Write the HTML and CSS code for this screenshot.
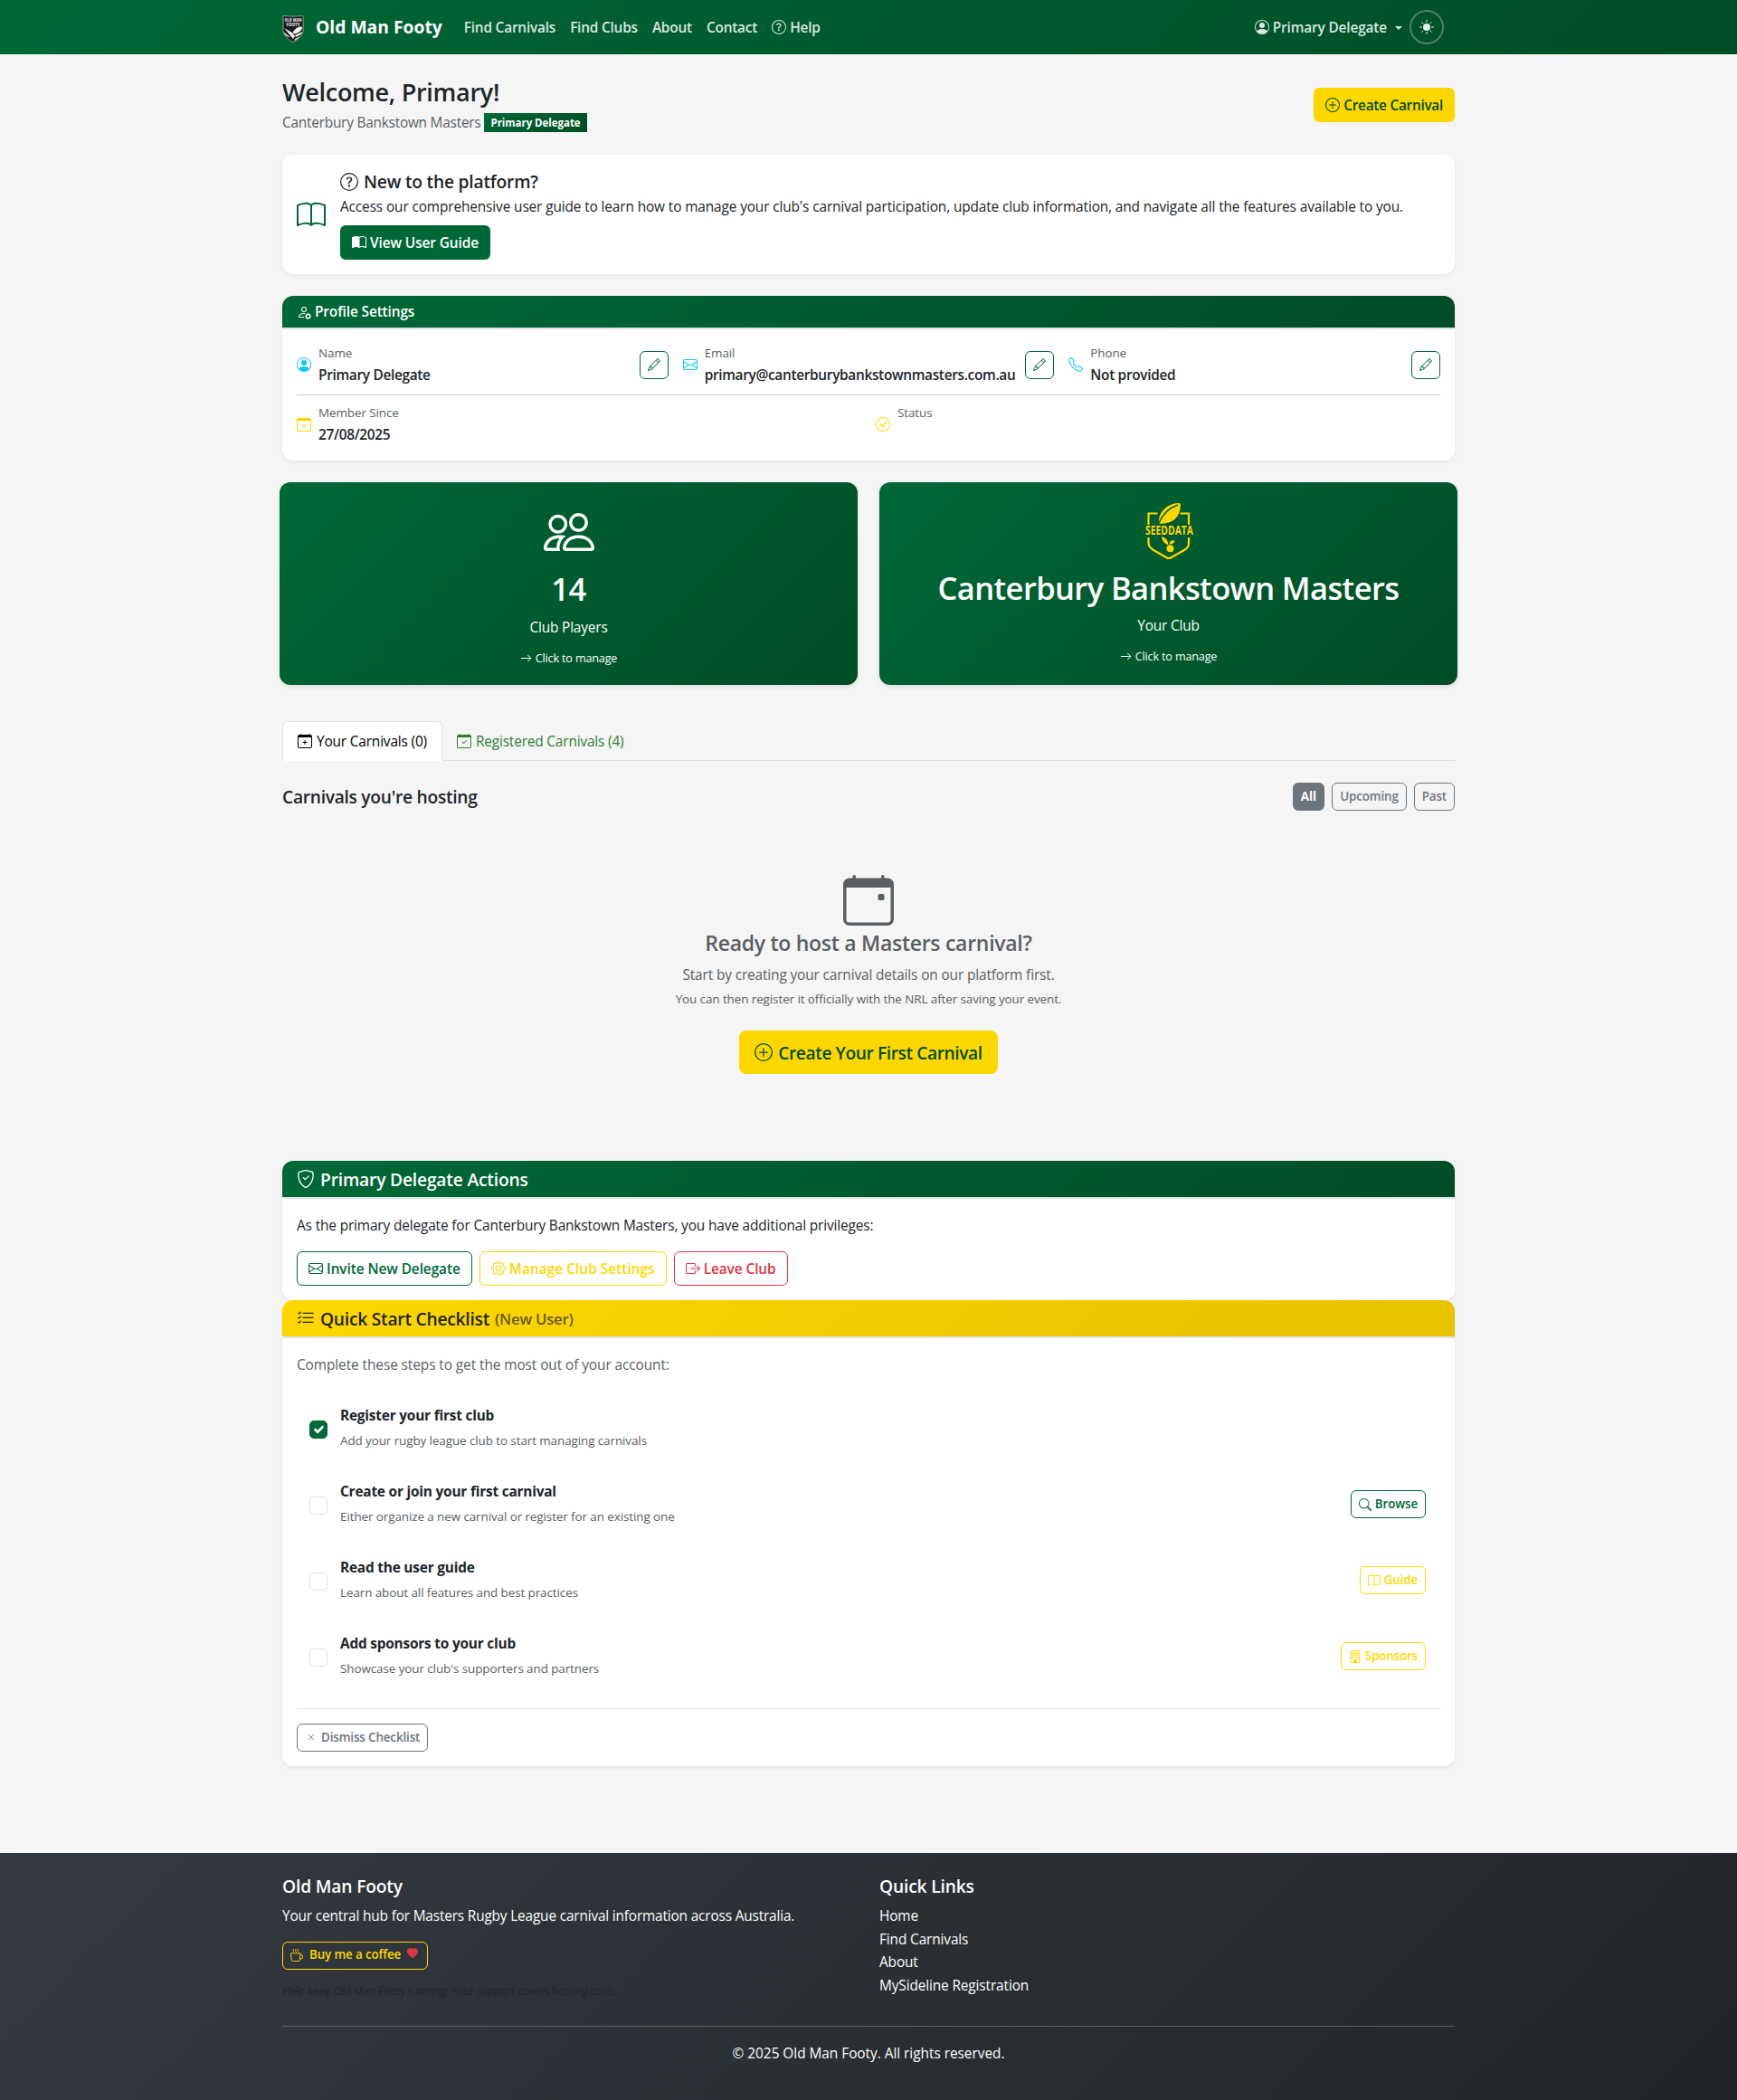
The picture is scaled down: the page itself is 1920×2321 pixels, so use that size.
FILE: index.html
```html
<!DOCTYPE html>
<html lang="en">
<head>
<meta charset="utf-8">
<title>Dashboard - Old Man Footy</title>
<link rel="stylesheet" href="styles.css">
</head>
<body>
<svg class="sprite" width="0" height="0" aria-hidden="true">
  <symbol id="question-circle" viewBox="0 0 16 16"><path d="M8 15A7 7 0 1 1 8 1a7 7 0 0 1 0 14m0 1A8 8 0 1 0 8 0a8 8 0 0 0 0 16"/><path d="M5.255 5.786a.237.237 0 0 0 .241.247h.825c.138 0 .248-.113.266-.25.09-.656.54-1.134 1.342-1.134.686 0 1.314.343 1.314 1.168 0 .635-.374.927-.965 1.371-.673.489-1.206 1.06-1.168 1.987l.003.217a.25.25 0 0 0 .25.246h.811a.25.25 0 0 0 .25-.25v-.105c0-.718.273-.927 1.01-1.486.609-.463 1.244-.977 1.244-2.056 0-1.511-1.276-2.241-2.673-2.241-1.267 0-2.655.59-2.75 2.286m1.557 5.763c0 .533.425.927 1.01.927.609 0 1.028-.394 1.028-.927 0-.552-.42-.94-1.029-.94-.584 0-1.009.388-1.009.94"/></symbol>
  <symbol id="person-circle" viewBox="0 0 16 16"><path d="M11 6a3 3 0 1 1-6 0 3 3 0 0 1 6 0"/><path fill-rule="evenodd" d="M0 8a8 8 0 1 1 16 0A8 8 0 0 1 0 8m8-7a7 7 0 0 0-5.468 11.37C3.242 11.226 4.805 10 8 10s4.757 1.225 5.468 2.37A7 7 0 0 0 8 1"/></symbol>
  <symbol id="sun" viewBox="0 0 16 16"><circle cx="8" cy="8" r="4"/><path fill="none" stroke="currentColor" stroke-linecap="round" d="M8 .5v2M8 13.5v2M.5 8h2M13.5 8h2M2.7 2.7l1.4 1.4M11.9 11.9l1.4 1.4M2.7 13.3l1.4-1.4M11.9 4.1l1.4-1.4"/></symbol>
  <symbol id="plus-circle" viewBox="0 0 16 16"><path d="M8 15A7 7 0 1 1 8 1a7 7 0 0 1 0 14m0 1A8 8 0 1 0 8 0a8 8 0 0 0 0 16"/><path d="M8 4a.5.5 0 0 1 .5.5v3h3a.5.5 0 0 1 0 1h-3v3a.5.5 0 0 1-1 0v-3h-3a.5.5 0 0 1 0-1h3v-3A.5.5 0 0 1 8 4"/></symbol>
  <symbol id="book" viewBox="0 0 16 16"><path d="M1 2.828c.885-.37 2.154-.769 3.388-.893 1.33-.134 2.458.063 3.112.752v9.746c-.935-.53-2.12-.603-3.213-.493-1.18.12-2.37.461-3.287.811zm7.5-.141c.654-.689 1.782-.886 3.112-.752 1.234.124 2.503.523 3.388.893v9.923c-.918-.35-2.107-.692-3.287-.81-1.094-.111-2.278-.039-3.213.492zM8 1.783C7.015.936 5.587.81 4.287.94c-1.514.153-3.042.672-3.994 1.105A.5.5 0 0 0 0 2.5v11a.5.5 0 0 0 .707.455c.882-.4 2.303-.881 3.68-1.02 1.409-.142 2.59.087 3.223.877a.5.5 0 0 0 .78 0c.633-.79 1.814-1.019 3.222-.877 1.378.139 2.8.62 3.681 1.02A.5.5 0 0 0 16 13.5v-11a.5.5 0 0 0-.293-.455c-.952-.433-2.48-.952-3.994-1.105C10.413.809 8.985.936 8 1.783"/></symbol>
  <symbol id="book-half" viewBox="0 0 16 16"><path d="M8.5 2.687c.654-.689 1.782-.886 3.112-.752 1.234.124 2.503.523 3.388.893v9.923c-.918-.35-2.107-.692-3.287-.81-1.094-.111-2.278-.039-3.213.492zM8 1.783C7.015.936 5.587.81 4.287.94c-1.514.153-3.042.672-3.994 1.105A.5.5 0 0 0 0 2.5v11a.5.5 0 0 0 .707.455c.882-.4 2.303-.881 3.68-1.02 1.409-.142 2.59.087 3.223.877a.5.5 0 0 0 .78 0c.633-.79 1.814-1.019 3.222-.877 1.378.139 2.8.62 3.681 1.02A.5.5 0 0 0 16 13.5v-11a.5.5 0 0 0-.293-.455c-.952-.433-2.48-.952-3.994-1.105C10.413.809 8.985.936 8 1.783"/></symbol>
  <symbol id="person-gear" viewBox="0 0 16 16"><path d="M11 5a3 3 0 1 1-6 0 3 3 0 0 1 6 0M8 7a2 2 0 1 0 0-4 2 2 0 0 0 0 4m.256 7a4.5 4.5 0 0 1-.229-1.004H3c.001-.246.154-.986.832-1.664C4.484 10.68 5.711 10 8 10q.39 0 .74.025c.226-.341.496-.65.804-.918Q8.844 9.002 8 9c-5 0-6 3-6 4s1 1 1 1zm3.63-4.54c.18-.613 1.048-.613 1.229 0l.043.148a.64.64 0 0 0 .921.382l.136-.074c.561-.306 1.175.308.87.869l-.075.136a.64.64 0 0 0 .382.92l.149.045c.612.18.612 1.048 0 1.229l-.15.043a.64.64 0 0 0-.38.921l.074.136c.305.561-.309 1.175-.87.87l-.136-.075a.64.64 0 0 0-.92.382l-.045.149c-.18.612-1.048.612-1.229 0l-.043-.15a.64.64 0 0 0-.921-.38l-.136.074c-.561.305-1.175-.309-.87-.87l.075-.136a.64.64 0 0 0-.382-.92l-.148-.045c-.613-.18-.613-1.048 0-1.229l.148-.043a.64.64 0 0 0 .382-.921l-.074-.136c-.306-.561.308-1.175.869-.87l.136.075a.64.64 0 0 0 .92-.382zM14 12.5a1.5 1.5 0 1 0-3 0 1.5 1.5 0 0 0 3 0"/></symbol>
  <symbol id="envelope" viewBox="0 0 16 16"><path d="M0 4a2 2 0 0 1 2-2h12a2 2 0 0 1 2 2v8a2 2 0 0 1-2 2H2a2 2 0 0 1-2-2zm2-1a1 1 0 0 0-1 1v.217l7 4.2 7-4.2V4a1 1 0 0 0-1-1zm13 2.383-4.708 2.825L15 11.105zm-.034 6.876-5.64-3.471L8 9.583l-1.326-.795-5.64 3.47A1 1 0 0 0 2 13h12a1 1 0 0 0 .966-.741M1 11.105l4.708-2.897L1 5.383z"/></symbol>
  <symbol id="telephone" viewBox="0 0 16 16"><path d="M3.654 1.328a.678.678 0 0 0-1.015-.063L1.605 2.3c-.483.484-.661 1.169-.45 1.77a17.6 17.6 0 0 0 4.168 6.608 17.6 17.6 0 0 0 6.608 4.168c.601.211 1.286.033 1.77-.45l1.034-1.034a.678.678 0 0 0-.063-1.015l-2.307-1.794a.68.68 0 0 0-.58-.122l-2.19.547a1.75 1.75 0 0 1-1.657-.459L5.482 8.062a1.75 1.75 0 0 1-.46-1.657l.548-2.19a.68.68 0 0 0-.122-.58zM1.884.511a1.745 1.745 0 0 1 2.612.163L6.29 2.98c.329.423.445.974.315 1.494l-.547 2.19a.68.68 0 0 0 .178.643l2.457 2.457a.68.68 0 0 0 .644.178l2.189-.547a1.75 1.75 0 0 1 1.494.315l2.306 1.794c.829.645.905 1.87.163 2.611l-1.034 1.034c-.74.74-1.846 1.065-2.877.702a18.6 18.6 0 0 1-7.01-4.42 18.6 18.6 0 0 1-4.42-7.009c-.362-1.03-.037-2.137.703-2.877z"/></symbol>
  <symbol id="pencil" viewBox="0 0 16 16"><path d="M12.146.146a.5.5 0 0 1 .708 0l3 3a.5.5 0 0 1 0 .708l-10 10a.5.5 0 0 1-.168.11l-5 2a.5.5 0 0 1-.65-.65l2-5a.5.5 0 0 1 .11-.168zM11.207 2.5 13.5 4.793 14.793 3.5 12.5 1.207zm1.586 3L10.5 3.207 4 9.707V10h.5a.5.5 0 0 1 .5.5v.5h.5a.5.5 0 0 1 .5.5v.5h.293zm-9.761 5.175-.106.106-1.528 3.821 3.821-1.528.106-.106A.5.5 0 0 1 5 12.5V12h-.5a.5.5 0 0 1-.5-.5V11h-.5a.5.5 0 0 1-.468-.325"/></symbol>
  <symbol id="calendar" viewBox="0 0 16 16"><path d="M3.5 0a.5.5 0 0 1 .5.5V1h8V.5a.5.5 0 0 1 1 0V1h1a2 2 0 0 1 2 2v11a2 2 0 0 1-2 2H2a2 2 0 0 1-2-2V3a2 2 0 0 1 2-2h1V.5a.5.5 0 0 1 .5-.5M1 4v10a1 1 0 0 0 1 1h12a1 1 0 0 0 1-1V4z"/></symbol>
  <symbol id="calendar-plus" viewBox="0 0 16 16"><use href="#calendar"/><path d="M8 7a.5.5 0 0 1 .5.5V9H10a.5.5 0 0 1 0 1H8.5v1.5a.5.5 0 0 1-1 0V10H6a.5.5 0 0 1 0-1h1.5V7.5A.5.5 0 0 1 8 7"/></symbol>
  <symbol id="calendar-check" viewBox="0 0 16 16"><use href="#calendar"/><path d="M10.854 7.146a.5.5 0 0 1 0 .708l-3 3a.5.5 0 0 1-.708 0l-1.5-1.5a.5.5 0 1 1 .708-.708L7.5 9.793l2.646-2.647a.5.5 0 0 1 .708 0"/></symbol>
  <symbol id="calendar-event" viewBox="0 0 16 16"><use href="#calendar"/><path d="M11 6.5a.5.5 0 0 1 .5-.5h1a.5.5 0 0 1 .5.5v1a.5.5 0 0 1-.5.5h-1a.5.5 0 0 1-.5-.5z"/></symbol>
  <symbol id="check-circle" viewBox="0 0 16 16"><path d="M8 15A7 7 0 1 1 8 1a7 7 0 0 1 0 14m0 1A8 8 0 1 0 8 0a8 8 0 0 0 0 16"/><path d="m10.97 4.97-.02.022-3.473 4.425-2.093-2.094a.75.75 0 0 0-1.06 1.06L6.97 11.03a.75.75 0 0 0 1.079-.02l3.992-4.99a.75.75 0 0 0-1.071-1.05"/></symbol>
  <symbol id="people" viewBox="0 0 16 16"><path d="M15 14s1 0 1-1-1-4-5-4-5 3-5 4 1 1 1 1zm-7.978-1L7 12.996c.001-.264.167-1.03.76-1.72C8.312 10.629 9.282 10 11 10c1.717 0 2.687.63 3.24 1.276.593.69.758 1.457.76 1.72l-.008.002-.014.002zM11 7a2 2 0 1 0 0-4 2 2 0 0 0 0 4m3-2a3 3 0 1 1-6 0 3 3 0 0 1 6 0M6.936 9.28a6 6 0 0 0-1.23-.247A7 7 0 0 0 5 9c-4 0-5 3-5 4q0 1 1 1h4.216A2.24 2.24 0 0 1 5 13c0-1.01.377-2.042 1.09-2.904.243-.294.526-.569.846-.816M4.92 10A5.5 5.5 0 0 0 4 13H1c0-.26.164-1.03.76-1.724.545-.636 1.492-1.256 3.16-1.275ZM1.5 5.5a3 3 0 1 1 6 0 3 3 0 0 1-6 0m3-2a2 2 0 1 0 0 4 2 2 0 0 0 0-4"/></symbol>
  <symbol id="arrow-right" viewBox="0 0 16 16"><path d="M1 8a.5.5 0 0 1 .5-.5h11.793l-3.147-3.146a.5.5 0 0 1 .708-.708l4 4a.5.5 0 0 1 0 .708l-4 4a.5.5 0 0 1-.708-.708L13.293 8.5H1.5A.5.5 0 0 1 1 8"/></symbol>
  <symbol id="shield-check" viewBox="0 0 16 16"><path d="M5.338 1.59a61 61 0 0 0-2.837.856.48.48 0 0 0-.328.39c-.554 4.157.726 7.19 2.253 9.188a10.7 10.7 0 0 0 2.287 2.233c.346.244.652.42.893.533q.18.085.293.118a1 1 0 0 0 .101.025 1 1 0 0 0 .1-.025q.114-.034.294-.118c.24-.113.547-.29.893-.533a10.7 10.7 0 0 0 2.287-2.233c1.527-1.997 2.807-5.031 2.253-9.188a.48.48 0 0 0-.328-.39c-.651-.213-1.75-.56-2.837-.855C9.552 1.29 8.531 1.067 8 1.067c-.53 0-1.552.223-2.662.524zM5.072.56C6.157.265 7.31 0 8 0s1.843.265 2.928.56c1.11.3 2.229.655 2.887.87a1.54 1.54 0 0 1 1.044 1.262c.596 4.477-.787 7.795-2.465 9.99a11.8 11.8 0 0 1-2.517 2.453 7 7 0 0 1-1.048.625c-.28.132-.581.24-.829.24s-.548-.108-.829-.24a7 7 0 0 1-1.048-.625 11.8 11.8 0 0 1-2.517-2.453C1.928 10.487.545 7.169 1.141 2.692A1.54 1.54 0 0 1 2.185 1.43 63 63 0 0 1 5.072.56"/><path d="M10.854 5.146a.5.5 0 0 1 0 .708l-3 3a.5.5 0 0 1-.708 0l-1.5-1.5a.5.5 0 1 1 .708-.708L7.5 7.793l2.646-2.647a.5.5 0 0 1 .708 0"/></symbol>
  <symbol id="gear" viewBox="0 0 16 16"><path d="M8 4.754a3.246 3.246 0 1 0 0 6.492 3.246 3.246 0 0 0 0-6.492M5.754 8a2.246 2.246 0 1 1 4.492 0 2.246 2.246 0 0 1-4.492 0"/><path d="M9.796 1.343c-.527-1.79-3.065-1.79-3.592 0l-.094.319a.873.873 0 0 1-1.255.52l-.292-.16c-1.64-.892-3.433.902-2.54 2.541l.159.292a.873.873 0 0 1-.52 1.255l-.319.094c-1.79.527-1.79 3.065 0 3.592l.319.094a.873.873 0 0 1 .52 1.255l-.16.292c-.892 1.64.901 3.434 2.541 2.54l.292-.159a.873.873 0 0 1 1.255.52l.094.319c.527 1.79 3.065 1.79 3.592 0l.094-.319a.873.873 0 0 1 1.255-.52l.292.16c1.64.893 3.434-.902 2.54-2.541l-.159-.292a.873.873 0 0 1 .52-1.255l.319-.094c1.79-.527 1.79-3.065 0-3.592l-.319-.094a.873.873 0 0 1-.52-1.255l.16-.292c.893-1.64-.902-3.433-2.541-2.54l-.292.159a.873.873 0 0 1-1.255-.52zm-2.633.283c.246-.835 1.428-.835 1.674 0l.094.319a1.873 1.873 0 0 0 2.693 1.115l.291-.16c.764-.415 1.6.42 1.184 1.185l-.159.292a1.873 1.873 0 0 0 1.116 2.692l.318.094c.835.246.835 1.428 0 1.674l-.319.094a1.873 1.873 0 0 0-1.115 2.693l.16.291c.415.764-.42 1.6-1.185 1.184l-.291-.159a1.873 1.873 0 0 0-2.693 1.116l-.094.318c-.246.835-1.428.835-1.674 0l-.094-.319a1.873 1.873 0 0 0-2.692-1.115l-.292.16c-.764.415-1.6-.42-1.184-1.185l.159-.291A1.873 1.873 0 0 0 1.945 8.93l-.319-.094c-.835-.246-.835-1.428 0-1.674l.319-.094A1.873 1.873 0 0 0 3.06 4.377l-.16-.292c-.415-.764.42-1.6 1.185-1.184l.292.159a1.873 1.873 0 0 0 2.692-1.115z"/></symbol>
  <symbol id="box-arrow-right" viewBox="0 0 16 16"><path d="M10 12.5a.5.5 0 0 1-.5.5h-8a.5.5 0 0 1-.5-.5v-9a.5.5 0 0 1 .5-.5h8a.5.5 0 0 1 .5.5v2a.5.5 0 0 0 1 0v-2A1.5 1.5 0 0 0 9.5 2h-8A1.5 1.5 0 0 0 0 3.5v9A1.5 1.5 0 0 0 1.5 14h8a1.5 1.5 0 0 0 1.5-1.5v-2a.5.5 0 0 0-1 0z"/><path d="M15.854 8.354a.5.5 0 0 0 0-.708l-3-3a.5.5 0 0 0-.708.708L14.293 7.5H5.5a.5.5 0 0 0 0 1h8.793l-2.147 2.146a.5.5 0 0 0 .708.708z"/></symbol>
  <symbol id="list-check" viewBox="0 0 16 16"><path fill="none" stroke="currentColor" stroke-linecap="round" stroke-linejoin="round" d="M5.5 3.5h9M5.5 7.5h9M5.5 11.5h9M1.5 3.5l.5.5 1.5-1.5M1.5 7.5l.5.5 1.5-1.5M1.5 11.5l.5.5 1.5-1.5"/></symbol>
  <symbol id="search" viewBox="0 0 16 16"><path d="M11.742 10.344a6.5 6.5 0 1 0-1.397 1.398h-.001q.044.06.098.115l3.85 3.85a1 1 0 0 0 1.415-1.414l-3.85-3.85a1 1 0 0 0-.115-.1zM12 6.5a5.5 5.5 0 1 1-11 0 5.5 5.5 0 0 1 11 0"/></symbol>
  <symbol id="building" viewBox="0 0 16 16"><path fill-rule="evenodd" d="M3 0h10a1 1 0 0 1 1 1v14a1 1 0 0 1-1 1H3a1 1 0 0 1-1-1V1a1 1 0 0 1 1-1m0 1v14h3v-2.5a.5.5 0 0 1 .5-.5h3a.5.5 0 0 1 .5.5V15h3V1z"/><path d="M4 2.5h2v2H4zm3 0h2v2H7zm3 0h2v2h-2zM4 5.5h2v2H4zm3 0h2v2H7zm3 0h2v2h-2zM4 8.5h2v2H4zm3 0h2v2H7zm3 0h2v2h-2zM6 12h4v3.5H6z"/></symbol>
  <symbol id="x" viewBox="0 0 16 16"><path fill="none" stroke="currentColor" stroke-linecap="round" d="M5 5l6 6M11 5l-6 6"/></symbol>
  <symbol id="cup-hot" viewBox="0 0 16 16"><path fill="none" stroke="currentColor" stroke-width="1.1" stroke-linecap="round" stroke-linejoin="round" d="M.7 5.5h12l-.8 8.600a1.500 1.500 0 0 1-1.500 1.400H3a1.500 1.500 0 0 1-1.500-1.400zM12.600 7.500h.7a2 2 0 0 1 0 5h-1.200M4 3.500c-1-1 .8-1.600 0-3M6.700 3.500c-1-1 .8-1.600 0-3M9.400 3.500c-1-1 .8-1.600 0-3"/></symbol>
  <symbol id="heart" viewBox="0 0 16 16"><path d="M8 1.314C12.438-3.248 23.534 4.735 8 15-7.534 4.736 3.562-3.248 8 1.314"/></symbol>
</svg>

<nav class="navbar">
  <div class="container navbar-inner">
    <a class="brand">
      <svg class="brand-logo" viewBox="0 0 24 30"><path d="M1 .5Q12 2 23 .5v17q-1 7-11 12-10-5-11-12z" fill="#17191a" stroke="#a9b3ae" stroke-width=".8"/><text x="12" y="7.200" text-anchor="middle" font-size="5" textLength="19" lengthAdjust="spacingAndGlyphs" fill="#d9dcdb" class="logo-text">OLD MAN</text><text x="12" y="12.400" text-anchor="middle" font-size="5.600" textLength="15" lengthAdjust="spacingAndGlyphs" fill="#d9dcdb" class="logo-text">FOOTY</text><path d="M2 14l9 5 3 4-2 3zM2 18.500l7 6-3-1q-4-2-4-5M22 18l-8 4 1 2 6-3zM20 23l-6 3-1 2q5-2 7-5" fill="#e9ecea"/><ellipse cx="17" cy="16.300" rx="5.800" ry="2.600" transform="rotate(-35 17 16.300)" fill="#f4f5f4"/></svg>
      <span>Old Man Footy</span>
    </a>
    <div class="nav-links">
      <a>Find Carnivals</a><a>Find Clubs</a><a>About</a><a>Contact</a>
      <a class="with-icon"><svg class="icon"><use href="#question-circle"/></svg>Help</a>
    </div>
    <div class="nav-user">
      <a class="with-icon"><svg class="icon"><use href="#person-circle"/></svg>Primary Delegate<span class="caret"></span></a>
      <button class="theme-toggle"><svg class="icon"><use href="#sun"/></svg></button>
    </div>
  </div>
</nav>

<main class="container">
  <header class="page-header">
    <div>
      <h1>Welcome, Primary!</h1>
      <div class="subtitle"><span>Canterbury Bankstown Masters</span><span class="badge">Primary Delegate</span></div>
    </div>
    <a class="btn btn-gold btn-create"><svg class="icon"><use href="#plus-circle"/></svg><span>Create Carnival</span></a>
  </header>

  <section class="card guide-card">
    <svg class="icon guide-icon"><use href="#book"/></svg>
    <div class="guide-body">
      <h2><svg class="icon"><use href="#question-circle"/></svg>New to the platform?</h2>
      <p>Access our comprehensive user guide to learn how to manage your club's carnival participation, update club information, and navigate all the features available to you.</p>
      <a class="btn btn-green"><svg class="icon"><use href="#book-half"/></svg><span>View User Guide</span></a>
    </div>
  </section>

  <section class="card profile-card">
    <div class="card-header small"><svg class="icon"><use href="#person-gear"/></svg><span>Profile Settings</span></div>
    <div class="profile-body">
      <div class="profile-row three">
        <div class="field"><svg class="icon info"><use href="#person-circle"/></svg><div class="field-text"><small>Name</small><strong>Primary Delegate</strong></div><a class="btn-edit"><svg class="icon"><use href="#pencil"/></svg></a></div>
        <div class="field"><svg class="icon info"><use href="#envelope"/></svg><div class="field-text"><small>Email</small><strong>primary@canterburybankstownmasters.com.au</strong></div><a class="btn-edit"><svg class="icon"><use href="#pencil"/></svg></a></div>
        <div class="field"><svg class="icon info"><use href="#telephone"/></svg><div class="field-text"><small>Phone</small><strong>Not provided</strong></div><a class="btn-edit"><svg class="icon"><use href="#pencil"/></svg></a></div>
      </div>
      <div class="profile-row two">
        <div class="field"><svg class="icon gold"><use href="#calendar-plus"/></svg><div class="field-text"><small>Member Since</small><strong>27/08/2025</strong></div></div>
        <div class="field"><svg class="icon gold"><use href="#check-circle"/></svg><div class="field-text"><small>Status</small></div></div>
      </div>
    </div>
  </section>

  <section class="stats">
    <a class="stat">
      <svg class="icon stat-icon"><use href="#people"/></svg>
      <div class="stat-value">14</div>
      <div class="stat-label">Club Players</div>
      <div class="stat-more"><svg class="icon"><use href="#arrow-right"/></svg>Click to manage</div>
    </a>
    <a class="stat stat-club">
      <svg class="club-logo" viewBox="0 0 56 64"><path d="M5.500 26V13.500H15.500M40.500 13.500H50V26M5.500 40v7Q6 51 11 54L25.500 62.300Q28 63.700 30.500 62.300L45 54Q50 51 50 47v-7" fill="none" stroke="#ffd700" stroke-width="2.200"/><path d="M17 24.500C16 14 24 3 38.500 2c2 0 2.700 1 2.500 3C40 18 32 26 17 24.500" fill="#ffd700"/><path d="M16.500 25Q23 9 38 4" fill="none" stroke="#005f31" stroke-width="1.400"/><path d="M20 39q7 1.500 7.500 9.500Q20.500 46 20 39M28.500 47.500q.5-5 6-4-1 4.500-6 4" fill="#ffd700"/><circle cx="29.500" cy="52.300" r="4" fill="#ffd700"/><text x="28.500" y="37" text-anchor="middle" font-size="13.500" textLength="53" lengthAdjust="spacingAndGlyphs" fill="#ffd700" class="logo-text seed">SEEDDATA</text></svg>
      <div class="stat-value">Canterbury Bankstown Masters</div>
      <div class="stat-label">Your Club</div>
      <div class="stat-more"><svg class="icon"><use href="#arrow-right"/></svg>Click to manage</div>
    </a>
  </section>

  <div class="tabs">
    <a class="tab active"><svg class="icon"><use href="#calendar-plus"/></svg><span>Your Carnivals (0)</span></a>
    <a class="tab"><svg class="icon"><use href="#calendar-check"/></svg><span>Registered Carnivals (4)</span></a>
  </div>

  <div class="list-header">
    <h2>Carnivals you're hosting</h2>
    <div class="filters"><a class="btn-sm grey filled">All</a><a class="btn-sm grey">Upcoming</a><a class="btn-sm grey">Past</a></div>
  </div>

  <section class="empty">
    <svg class="icon empty-icon"><use href="#calendar-event"/></svg>
    <h3>Ready to host a Masters carnival?</h3>
    <p>Start by creating your carnival details on our platform first.</p>
    <small>You can then register it officially with the NRL after saving your event.</small>
    <a class="btn btn-gold btn-lg"><svg class="icon"><use href="#plus-circle"/></svg><span>Create Your First Carnival</span></a>
  </section>

  <section class="card actions-card">
    <div class="card-header"><svg class="icon"><use href="#shield-check"/></svg><span>Primary Delegate Actions</span></div>
    <p>As the primary delegate for Canterbury Bankstown Masters, you have additional privileges:</p>
    <div class="actions">
      <a class="btn outline green"><svg class="icon"><use href="#envelope"/></svg><span>Invite New Delegate</span></a>
      <a class="btn outline gold"><svg class="icon"><use href="#gear"/></svg><span>Manage Club Settings</span></a>
      <a class="btn outline red"><svg class="icon"><use href="#box-arrow-right"/></svg><span>Leave Club</span></a>
    </div>
  </section>

  <section class="card checklist-card">
    <div class="card-header header-gold"><svg class="icon"><use href="#list-check"/></svg><span>Quick Start Checklist</span><small>(New User)</small></div>
    <p>Complete these steps to get the most out of your account:</p>
    <ul class="checklist">
      <li><span class="check checked"><svg viewBox="0 0 20 20"><path d="m6 10 3 3 6-6"/></svg></span><div class="step"><strong>Register your first club</strong><small>Add your rugby league club to start managing carnivals</small></div></li>
      <li><span class="check"></span><div class="step"><strong>Create or join your first carnival</strong><small>Either organize a new carnival or register for an existing one</small></div><a class="btn-sm green"><svg class="icon"><use href="#search"/></svg>Browse</a></li>
      <li><span class="check"></span><div class="step"><strong>Read the user guide</strong><small>Learn about all features and best practices</small></div><a class="btn-sm gold"><svg class="icon"><use href="#book"/></svg>Guide</a></li>
      <li><span class="check"></span><div class="step"><strong>Add sponsors to your club</strong><small>Showcase your club's supporters and partners</small></div><a class="btn-sm gold"><svg class="icon"><use href="#building"/></svg>Sponsors</a></li>
    </ul>
    <div class="dismiss"><a class="btn-sm grey"><svg class="icon"><use href="#x"/></svg><span>Dismiss Checklist</span></a></div>
  </section>
</main>

<footer class="footer">
  <div class="container">
    <div class="footer-cols">
      <div>
        <h2>Old Man Footy</h2>
        <p>Your central hub for Masters Rugby League carnival information across Australia.</p>
        <a class="btn-sm gold coffee"><svg class="icon"><use href="#cup-hot"/></svg>Buy me a coffee<svg class="icon heart"><use href="#heart"/></svg></a>
        <small class="support">Help keep Old Man Footy running! Your support covers hosting costs.</small>
      </div>
      <div>
        <h2>Quick Links</h2>
        <ul><li>Home</li><li>Find Carnivals</li><li>About</li><li>MySideline Registration</li></ul>
      </div>
    </div>
    <div class="copyright">© 2025 Old Man Footy. All rights reserved.</div>
  </div>
</footer>
</body>
</html>
```
FILE: styles.css
```css
:root {
  --green: #006837;
  --green-dark: #004d25;
  --gold: #ffd700;
  --muted: #5a5f63;
  --ink: #212529;
  --line: #dee2e6;
  --gradient: linear-gradient(135deg, var(--green) 0%, var(--green-dark) 100%);
}

* { box-sizing: border-box; }

body {
  margin: 0;
  background: #f5f5f5;
  color: var(--ink);
  font: 400 15.4px/25.6px "Open Sans", "Noto Sans", sans-serif;
  letter-spacing: -.12px;
}

h1, h2, h3, p, ul { margin: 0; padding: 0; font-weight: 600; }
p { font-weight: 400; }
ul { list-style: none; font-weight: 400; }
small { font-size: 13.45px; letter-spacing: -.09px; }
strong { font-weight: 600; letter-spacing: -.31px; }
button { font: inherit; background: none; }

.sprite { position: absolute; }
.icon { width: 16px; height: 16px; fill: currentColor; flex: none; }
.logo-text { font-family: "Open Sans", sans-serif; font-weight: 800; letter-spacing: 0; }
.seed { font-weight: 700; }
.container { width: 1296px; margin: 0 auto; }
.with-icon { display: flex; align-items: center; gap: 4px; }
.with-icon .icon { margin-top: -1px; }

/* Navigation */
.navbar { height: 60px; background: var(--gradient); }
.navbar-inner { height: 60px; display: flex; align-items: center; }
.brand { display: flex; align-items: center; gap: 13px; color: #fff; font-size: 19.3px; font-weight: 700; letter-spacing: 0; }
.brand-logo { width: 24px; height: 30px; margin-top: 3px; overflow: visible; }
.nav-links { display: flex; gap: 16px; margin-left: 24px; padding-top: 1px; flex: 1; color: #dbe7e0; font-weight: 600; letter-spacing: -.2px; }
.nav-user { display: flex; align-items: center; gap: 8px; margin-right: 12px; color: #dbe7e0; font-weight: 600; letter-spacing: -.15px; }
.nav-user .with-icon { padding-top: 1px; }
.caret { border: 4px solid transparent; border-top-color: currentColor; border-bottom: 0; margin: 0 0 0 5px; }
.theme-toggle { width: 38px; height: 38px; padding: 0; border: 2px solid #4d8265; border-radius: 50%; color: #e6efea; display: grid; place-items: center; }

/* Buttons */
.btn {
  display: inline-flex; align-items: center; height: 38px; padding: 0 12px; gap: 4px;
  border: 1px solid transparent; border-radius: 6px;
  font-weight: 600; letter-spacing: -.28px; white-space: nowrap;
}
.btn span, .card-header span, .tab span, .dismiss span { padding-top: 1.5px; }
.btn-gold { background: var(--gold); color: var(--green-dark); }
.btn-green { background: var(--green); color: #fff; letter-spacing: -.1px; }
.btn.outline { letter-spacing: -.07px; }
.btn.outline.gold { letter-spacing: .03px; }
.btn-lg { height: 48px; font-size: 19.2px; letter-spacing: -.42px; padding: 0 16px; gap: 6px; border-radius: 8px; }
.btn-lg .icon { width: 20px; height: 20px; }
.green { color: var(--green); border-color: var(--green); }
.gold { color: var(--gold); border-color: var(--gold); }
.red { color: #dc3545; border-color: #dc3545; }
.info { color: #0dcaf0; }
.btn-sm {
  display: inline-flex; align-items: center; height: 31px; padding: 0 8px; gap: 4px;
  border: 1px solid; border-radius: 6px;
  font-size: 13.4px; font-weight: 600; letter-spacing: -.13px; white-space: nowrap;
}
.btn-sm .icon { width: 14px; height: 14px; }
.grey { color: #6c757d; border-color: #6c757d; }
.filled { color: #fff; background: #6c757d; font-weight: 700; letter-spacing: 0; }

/* Page header */
.page-header { height: 111px; display: flex; justify-content: space-between; padding-top: 23px; }
.page-header h1 { font-size: 27px; line-height: 38px; letter-spacing: -.28px; }
.subtitle { display: flex; align-items: center; gap: 4px; height: 26px; margin-top: 2px; color: var(--muted); letter-spacing: -.23px; }
.badge { height: 21px; line-height: 22px; padding: 0 7px; margin-top: -1px; background: var(--gradient); color: #fff; font-size: 11.5px; font-weight: 700; letter-spacing: -.04px; }
.btn-create { margin-top: 14px; }

/* Cards */
.card { background: #fff; border-radius: 12px; box-shadow: 0 2px 4px rgba(0, 0, 0, .075); overflow: hidden; }
.card-header {
  display: flex; align-items: center; gap: 6px; height: 42px; padding: 0 16px;
  border-bottom: 2px solid var(--line);
  background: var(--gradient); background-clip: padding-box; color: #fff;
  font-size: 19.2px; font-weight: 600; letter-spacing: -.17px;
}
.card-header .icon { width: 20px; height: 20px; }
.card-header.small { height: 37px; font-size: 15.4px; gap: 4px; letter-spacing: -.12px; }
.card-header.small .icon { width: 16px; height: 16px; }
.card-header.header-gold { background: linear-gradient(135deg, #ffd700, #e6c200); background-clip: padding-box; color: var(--ink); }
.card-header.header-gold span { letter-spacing: -.23px; }
.card-header small { font-size: 16.8px; letter-spacing: -.25px; opacity: .75; color: #333; padding-top: 2px; }

.guide-card { height: 132px; padding: 16px; display: flex; align-items: center; gap: 16px; }
.guide-icon { width: 32px; height: 32px; color: var(--green); margin-top: 2px; }
.guide-body { align-self: flex-start; padding-top: 2px; }
.guide-body h2 { display: flex; align-items: center; gap: 6px; height: 24px; font-size: 19.2px; letter-spacing: -.2px; }
.guide-body h2 .icon { width: 20px; height: 20px; }
.guide-body p { margin: 3px 0 7px; }

.profile-card { height: 182px; margin-top: 24px; }
.profile-body { padding: 0 16px; }
.profile-row { display: grid; gap: 16px; }
.three { grid-template-columns: repeat(3, 1fr); height: 73px; border-bottom: 1px solid #c8c9ca; padding-top: 13px; }
.two { grid-template-columns: repeat(2, 1fr); padding-top: 6px; }
.field { display: flex; align-items: center; gap: 8px; height: 52px; }
.field-text { flex: 1; height: 52px; padding-top: 1px; }
.field-text small, .field-text strong { display: block; height: 25px; line-height: 24px; }
.field-text small { color: var(--muted); }
.btn-edit { width: 32px; height: 31px; border: 1px solid var(--green); border-radius: 6px; color: var(--green); display: grid; place-items: center; }
.btn-edit .icon { width: 14px; height: 14px; }

/* Statistic tiles */
.stats { display: grid; grid-template-columns: 1fr 1fr; gap: 24px; margin: 24px -3px 40px; }
.stat { height: 224px; padding-top: 27px; border-radius: 12px; background: var(--gradient); color: #fff; display: flex; flex-direction: column; align-items: center; box-shadow: 0 2px 4px rgba(0, 0, 0, .1); }
.stat-icon { width: 56px; height: 56px; }
.stat-value { margin-top: 10px; font-size: 34.5px; line-height: 50px; font-weight: 600; letter-spacing: -.6px; }
.stat-label { margin-top: 5px; letter-spacing: -.16px; line-height: 26px; }
.stat-more { display: flex; align-items: center; gap: 4px; margin-top: 8px; font-size: 12.6px; font-weight: 400; letter-spacing: -.15px; }
.stat-more .icon { width: 13px; height: 13px; }
.stat-club { padding-top: 21px; }
.club-logo { width: 56px; height: 64px; overflow: visible; }
.stat-club .stat-value { margin-top: 7px; }
.stat-club .stat-label { margin-top: 4px; }

/* Tabs */
.tabs { display: flex; height: 44px; border-bottom: 1px solid var(--line); }
.tab { display: flex; align-items: center; gap: 5px; height: 44px; padding: 0 16px; color: #2e7d32; letter-spacing: -.16px; }
.tab.active { background: #fff; color: #000; border: 1px solid var(--line); border-bottom-color: #fff; border-radius: 6px 6px 0 0; padding: 0 16px; }
.list-header { display: flex; justify-content: space-between; align-items: center; height: 31px; margin-top: 24px; }
.list-header h2 { font-size: 19.2px; letter-spacing: -.28px; padding-top: 1px; }
.filters { display: flex; gap: 8px; }

/* Empty state */
.empty { height: 387px; padding-top: 71px; display: flex; flex-direction: column; align-items: center; color: var(--muted); }
.empty-icon { width: 56px; height: 56px; }
.empty h3 { font-size: 23px; line-height: 30px; letter-spacing: -.28px; margin-top: 4px; }
.empty p { margin-top: 8px; letter-spacing: -.13px; }
.empty small { padding-top: 1px; }
.empty .btn { margin-top: 22px; }

/* Delegate actions */
.actions-card { height: 154px; }
.actions-card p, .checklist-card p { margin: 17px 16px 0; }
.actions-card p { letter-spacing: -.14px; }
.actions { display: flex; gap: 8px; margin: 15px 16px 0; }

/* Checklist */
.checklist-card { height: 515px; }
.checklist-card p { color: var(--muted); letter-spacing: -.08px; }
.checklist { margin: 15px 16px 0; padding: 0 16px 0 14px; height: 352px; border-bottom: 1px solid var(--line); }
.checklist li { height: 84px; display: flex; align-items: center; }
.check { width: 20px; height: 20px; border: 1px solid #dee2e6; border-radius: 5px; margin-top: 2px; }
.checked { background: var(--green); border-color: var(--green); }
.checked svg { display: block; width: 18px; height: 18px; fill: none; stroke: #fff; stroke-width: 3; stroke-linecap: round; stroke-linejoin: round; }
.step { flex: 1; margin-left: 14px; display: flex; flex-direction: column; }
.step strong { font-weight: 700; letter-spacing: -.2px; line-height: 28px; }
.step small { color: var(--muted); line-height: 27px; }
.dismiss { padding: 16px; }

/* Footer */
.footer { height: 273px; margin-top: 96px; background: linear-gradient(135deg, #343a40 0%, #212529 100%); color: #fff; }
.footer-cols { display: grid; grid-template-columns: 1fr 1fr; gap: 24px; height: 192px; padding-top: 24px; border-bottom: 1px solid #5b6063; }
.footer h2 { height: 38px; line-height: 26px; font-size: 19.2px; letter-spacing: -.15px; }
.footer p, .footer ul { margin-top: -6px; padding-top: 1px; }
.footer p { letter-spacing: -.17px; }
.footer a.coffee { display: flex; width: 161px; margin-top: 15px; letter-spacing: -.14px; gap: 7px; }
.coffee .heart { width: 12px; height: 12px; color: #dc3545; margin: -4px 0 0; }
.support { display: block; margin-top: 11px; color: #212529; font-size: 12.1px; letter-spacing: -.28px; }
.copyright { text-align: center; padding-top: 17px; letter-spacing: -.03px; }
```
